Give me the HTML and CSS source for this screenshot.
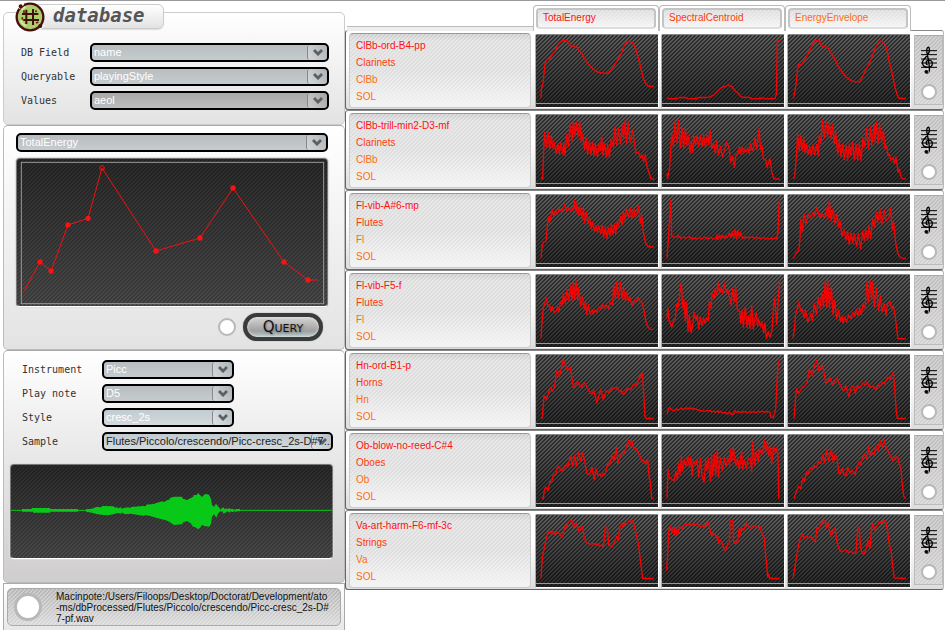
FILE: index.html
```html
<!DOCTYPE html>
<html lang="en">
<head>
<meta charset="utf-8">
<title>database</title>
<link rel="stylesheet" href="styles.css">
</head>
<body>
<svg class="defs" aria-hidden="true">
  <symbol id="arrow" viewBox="0 0 12 10"><path d="M1 3l2-2 3 3 3-3 2 2-5 5z" fill="#5c6063"/></symbol>
  <symbol id="clef" viewBox="795 138 54 90">
    <path d="M798 153.500h48M798 165.500h48M798 178.500h48M798 190.500h48M798 203.500h48" stroke="#000" stroke-width="3" fill="none"/>
    <path d="M823 216C825 200 819 174 816 160C813 148 818 141 822 144C826 153 820 166 809 177C796 190 804 205 820 203C836 202 835 183 822 182C812 182 811 194 818 196" stroke="#000" stroke-width="4" fill="none"/>
    <path d="M823 205C824 214 823 223 815 222" stroke="#000" stroke-width="2" fill="none"/>
    <circle cx="814" cy="217" r="5.500"/>
  </symbol>
</svg>
<main class="app">
  <div class="controls">
    <section class="panel panel-db">
      <header class="brand">
        <svg class="logo" viewBox="0 0 96 96" aria-hidden="true">
          <circle cx="48" cy="48" r="40" fill="#a9cf6b" stroke="#4a0d0d" stroke-width="7"/>
          <path d="M15 22L29 9M78 84L91 72" stroke="#fff" stroke-width="5"/>
          <path d="M20 58Q24 70 36 75M23 27L35 17" stroke="#d6edaa" stroke-width="5" fill="none"/>
          <path d="M37 26V69M57 24V72M24 39H73M28 57H75" stroke="#3f100d" stroke-width="6" fill="none"/>
          <path d="M30 28V36M66 28V34M25 49V56M66 66L73 63" stroke="#7c1510" stroke-width="5"/>
          <circle cx="20" cy="16" r="6" fill="#4a0d0d"/><circle cx="79" cy="75" r="6" fill="#4a0d0d"/>
        </svg>
        <h1>database</h1>
      </header>
      <div class="fields">
        <label for="field">DB Field</label>
        <div class="pick"><svg class="arrow"><use href="#arrow"/></svg><select id="field"><option>name</option></select></div>
        <label for="queryable">Queryable</label>
        <div class="pick"><svg class="arrow"><use href="#arrow"/></svg><select id="queryable"><option>playingStyle</option></select></div>
        <label for="values">Values</label>
        <div class="pick pick-grey"><svg class="arrow"><use href="#arrow"/></svg><select id="values"><option>aeol</option></select></div>
      </div>
    </section>
    <section class="panel panel-query">
      <div class="pick"><svg class="arrow"><use href="#arrow"/></svg><select aria-label="Descriptor"><option>TotalEnergy</option></select></div>
      <svg class="screen editor" viewBox="51 102 930 441" preserveAspectRatio="none">
        <rect x="64" y="112" width="907" height="424" fill="none" stroke="#999" stroke-width="3"/>
        <polyline points="72,498 120,411 153,438 204,300 264,280 306,129 468,378 600,339 699,189 852,411 924,465 954,465" fill="none" stroke="#f21010" stroke-width="3"/>
        <g fill="#f81313"><circle cx="120" cy="411" r="8"/><circle cx="153" cy="438" r="8"/><circle cx="204" cy="300" r="8"/><circle cx="264" cy="280" r="8"/><circle cx="468" cy="378" r="8"/><circle cx="600" cy="339" r="8"/><circle cx="699" cy="189" r="8"/><circle cx="852" cy="411" r="8"/><circle cx="924" cy="465" r="8"/></g>
        <circle cx="306" cy="129" r="7" fill="none" stroke="#f21010" stroke-width="3"/>
      </svg>
      <div class="actions"><input type="radio" class="lamp" aria-label="Query status"><button class="query" type="button">Query</button></div>
    </section>
    <section class="panel panel-sample">
      <div class="fields fields-short">
        <label for="instrument">Instrument</label>
        <div class="pick"><svg class="arrow"><use href="#arrow"/></svg><select id="instrument"><option>Picc</option></select></div>
        <label for="note">Play note</label>
        <div class="pick"><svg class="arrow"><use href="#arrow"/></svg><select id="note"><option>D5</option></select></div>
        <label for="style">Style</label>
        <div class="pick pick-light"><svg class="arrow"><use href="#arrow"/></svg><select id="style"><option>cresc_2s</option></select></div>
        <label for="sample">Sample</label>
        <div class="pick pick-light pick-long"><svg class="arrow"><use href="#arrow"/></svg><select id="sample"><option>Flutes/Piccolo/crescendo/Picc-cresc_2s-D#7...</option></select></div>
      </div>
      <svg class="screen wave" viewBox="33 360 963 279" preserveAspectRatio="none">
        <path d="M33 496H996" stroke="#08c818" stroke-width="3"/>
        <path fill="#08c818" d="M66 492H96V489H150V492H234V500H150V503H99V500H66zM258 493L276 491L288 486L306 487V483L340 484L346 488L352 486V490L364 487V491L382 487L392 489V486L430 483L438 484V479L460 477L486 469L492 471L501 466L510 463V459L522 455H546L549 461L561 465L573 459L579 455L582 450H590L594 444L600 450L606 456L612 449L618 447L627 449L633 462L636 479L642 486L648 476L654 484L658 488L661 495V498L655 505L649 518L642 508L636 516L633 536L628 545L613 543L606 539L600 549L593 552L585 546H580L572 535L561 528L550 532L546 538L522 540L510 532L503 528L495 525L470 519L450 513L438 511L428 512L392 506L375 508L365 502V506L352 504L343 507L324 511L303 509L290 507L276 503L258 500zM662 491L672 487V492L679 490L681 493L689 489L691 493L698 491L701 494H708V492H720V499H711L708 502L704 498L698 502L692 499L688 503L682 499L676 503L670 506L668 499L662 501z"/>
      </svg>
    </section>
    <footer class="panel-path"><div class="path-bar"><input type="radio" class="lamp lamp-large" aria-label="Play sample"><p>Macinpote:/Users/Filoops/Desktop/Doctorat/Development/ato<br>-ms/dbProcessed/Flutes/Piccolo/crescendo/Picc-cresc_2s-D#<br>7-pf.wav</p></div></footer>
  </div>

  <section class="results">
    <div class="heads"><span class="shelf"></span><div class="head"><b class="c1">TotalEnergy</b></div><div class="head"><b class="c2">SpectralCentroid</b></div><div class="head"><b class="c3">EnergyEnvelope</b></div></div>

    <article class="row">
      <div class="info"><p class="c1">ClBb-ord-B4-pp</p><p class="c2">Clarinets</p><p class="c3">ClBb</p><p class="c3">SOL</p></div>
      <div class="cell"><svg class="chart" viewBox="573 105 366 213" preserveAspectRatio="none"><polyline points="588,292 589,265 594,248 600,190 606,177 614,176 623,160 630,153 640,131 649,124 656,121 664,121 670,127 677,137 686,138 697,142 703,153 710,158 718,174 728,188 735,197 746,207 758,215 772,217 786,219 796,212 806,198 812,188 821,173 829,160 837,138 844,127 852,123 862,127 868,137 874,151 880,173 888,204 895,234 902,248 910,257 927,257"/></svg></div>
      <div class="cell"><svg class="chart" viewBox="21 105 366 213" preserveAspectRatio="none"><polyline points="36,291 45,294 66,293 72,290 92,290 99,294 125,293 130,290 152,290 164,289 175,283 184,274 195,264 206,258 214,256 220,252 225,256 231,257 240,270 250,278 258,287 265,290 281,289 290,294 316,293 322,290 332,294 354,293 360,292 364,280 367,124 376,120"/></svg></div>
      <div class="cell"><svg class="chart" viewBox="399 105 366 213" preserveAspectRatio="none"><polyline points="414,293 417,286 423,252 428,204 431,192 440,192 450,177 459,160 466,147 473,130 480,122 494,122 500,138 511,140 520,144 526,157 536,170 543,183 550,198 562,216 574,230 589,240 600,244 615,243 620,233 630,212 640,195 650,172 660,145 668,130 679,122 688,131 695,145 702,180 711,216 720,260 727,283 733,293 752,293"/></svg></div>
      <div class="side"><div class="tools"><svg class="clef"><use href="#clef"/></svg><input type="radio" name="hit" class="lamp" aria-label="ClBb-ord-B4-pp"></div></div>
    </article>

    <article class="row">
      <div class="info"><p class="c1">ClBb-trill-min2-D3-mf</p><p class="c2">Clarinets</p><p class="c3">ClBb</p><p class="c3">SOL</p></div>
      <div class="cell"><svg class="chart" viewBox="573 345 366 213" preserveAspectRatio="none"><polyline points="587,534 593,534 596,450 599,396 604,440 609,396 614,446 619,405 623,442 628,426 633,458 639,430 643,460 648,426 653,460 657,429 660,465 665,402 670,438 675,374 681,422 685,363 690,407 694,365 699,408 704,364 709,426 713,402 719,448 723,413 728,460 733,420 738,462 743,427 747,465 751,430 757,470 762,432 766,450 770,407 774,466 779,430 784,470 788,433 793,470 799,414 805,440 810,380 815,435 821,383 826,430 833,376 836,416 840,362 845,430 849,365 855,425 863,390 868,426 873,458 881,456 886,472 891,463 896,482 901,463 905,493 912,515 918,534 928,535"/></svg></div>
      <div class="cell"><svg class="chart" viewBox="21 345 366 213" preserveAspectRatio="none"><polyline points="36,517 38,533 44,500 48,430 51,402 55,438 60,366 66,427 70,361 76,442 81,384 86,442 91,387 95,432 100,405 105,456 109,426 113,456 116,407 121,433 126,407 131,439 136,405 141,438 146,405 151,439 157,405 161,432 165,389 170,444 176,430 181,459 185,422 190,464 196,438 202,467 208,452 214,425 222,440 227,486 233,466 238,500 243,463 249,459 253,440 257,460 261,440 266,459 270,446 274,454 278,442 283,459 286,429 291,450 295,446 300,414 305,446 309,413 312,386 317,447 321,435 325,475 332,477 336,500 345,474 350,512 356,533 375,535"/></svg></div>
      <div class="cell"><svg class="chart" viewBox="399 345 366 213" preserveAspectRatio="none"><polyline points="414,534 419,528 424,470 428,403 433,451 437,407 441,450 446,411 450,458 455,430 459,463 464,439 469,465 474,433 479,464 485,432 490,466 493,403 498,430 502,360 508,413 513,365 518,407 523,370 528,413 533,373 537,429 542,395 548,460 553,421 558,469 563,431 568,477 573,436 578,479 583,431 588,466 593,424 598,478 603,432 608,478 613,431 618,479 624,412 629,440 635,382 640,444 647,380 650,434 658,375 660,424 664,365 669,430 674,374 680,425 685,391 690,444 695,436 699,466 703,461 708,480 714,470 718,487 723,469 729,514 733,505 739,532 752,535"/></svg></div>
      <div class="side"><div class="tools"><svg class="clef"><use href="#clef"/></svg><input type="radio" name="hit" class="lamp" aria-label="ClBb-trill-min2-D3-mf"></div></div>
    </article>

    <article class="row">
      <div class="info"><p class="c1">Fl-vib-A#6-mp</p><p class="c2">Flutes</p><p class="c3">Fl</p><p class="c3">SOL</p></div>
      <div class="cell"><svg class="chart" viewBox="18 30 366 213" preserveAspectRatio="none"><polyline points="33,218 36,183 40,169 48,167 53,112 55,95 59,112 66,72 71,92 77,76 82,87 88,71 95,78 104,58 111,80 116,68 122,78 127,70 130,77 133,46 138,81 141,53 145,88 149,64 156,99 160,68 164,113 169,79 174,115 179,99 184,130 188,110 193,137 197,121 202,139 206,121 212,145 216,119 221,154 226,125 231,159 235,127 240,150 244,116 249,147 253,115 257,145 262,109 266,122 271,93 276,120 280,79 285,104 289,72 295,94 301,68 305,99 311,68 315,95 320,88 326,62 331,114 335,89 340,140 347,173 354,183 371,183"/></svg></div>
      <div class="cell"><svg class="chart" viewBox="396 30 366 213" preserveAspectRatio="none"><polyline points="411,218 416,146 422,46 425,150 429,154 439,155 446,150 452,158 460,154 467,158 478,153 484,160 491,157 500,160 508,155 515,160 524,155 532,160 543,155 548,160 559,160 562,146 565,161 569,149 573,159 578,149 583,158 588,151 592,157 598,143 603,156 606,138 611,156 615,132 619,160 623,133 628,156 632,141 638,158 646,155 656,157 665,153 673,158 681,155 690,159 700,156 710,160 724,159 740,158 744,140 747,60 749,43"/></svg></div>
      <div class="cell"><svg class="chart" viewBox="774 30 366 213" preserveAspectRatio="none"><polyline points="789,218 800,199 806,196 810,160 812,102 817,137 822,85 828,115 835,86 841,97 847,83 853,92 861,67 869,97 875,85 881,94 887,92 892,66 895,98 898,47 903,106 909,71 915,116 921,86 925,123 930,107 936,152 942,131 948,163 953,138 958,177 963,143 969,173 973,145 980,182 985,145 992,189 998,136 1003,164 1007,132 1013,163 1017,123 1022,158 1028,101 1033,124 1039,82 1043,111 1050,71 1055,117 1063,75 1068,106 1077,98 1082,69 1087,133 1091,111 1097,172 1104,204 1111,215 1128,219"/></svg></div>
      <div class="side"><div class="tools"><svg class="clef"><use href="#clef"/></svg><input type="radio" name="hit" class="lamp" aria-label="Fl-vib-A#6-mp"></div></div>
    </article>

    <article class="row">
      <div class="info"><p class="c1">Fl-vib-F5-f</p><p class="c2">Flutes</p><p class="c3">Fl</p><p class="c3">SOL</p></div>
      <div class="cell"><svg class="chart" viewBox="18 270 366 213" preserveAspectRatio="none"><polyline points="33,458 36,410 40,366 44,355 49,339 54,361 58,358 63,378 67,364 73,382 79,376 83,364 87,379 91,349 97,360 100,326 106,353 111,313 117,345 122,303 126,346 130,289 134,339 138,287 143,344 146,308 152,362 157,335 163,371 166,347 170,386 175,358 180,386 186,373 190,386 194,374 200,380 207,365 213,371 217,355 222,368 229,359 236,370 241,351 248,357 251,300 256,340 260,292 265,338 271,290 276,339 281,309 286,346 291,322 296,348 300,337 306,361 313,346 319,349 325,337 330,347 335,350 340,364 347,405 353,423 360,430 372,431"/></svg></div>
      <div class="cell"><svg class="chart" viewBox="396 270 366 213" preserveAspectRatio="none"><polyline points="411,398 414,367 416,402 420,410 425,424 431,404 436,400 440,356 445,365 449,326 454,292 458,366 462,343 466,406 470,352 474,437 478,388 483,440 488,421 492,380 498,403 502,388 506,430 511,395 516,419 521,398 525,413 529,397 535,405 538,348 543,368 546,325 552,340 555,311 560,330 564,293 569,322 574,307 578,325 584,293 588,321 594,315 598,334 603,358 608,310 613,349 617,306 622,370 629,379 632,411 636,373 640,424 646,364 651,425 656,391 660,428 665,360 670,430 678,380 683,420 686,401 691,422 695,408 701,441 705,411 709,458 715,437 720,454 726,435 730,370 734,336 740,416 745,340 749,286"/></svg></div>
      <div class="cell"><svg class="chart" viewBox="774 270 366 213" preserveAspectRatio="none"><polyline points="789,458 793,430 797,386 803,364 807,350 812,377 817,372 822,395 827,375 833,409 838,399 843,384 847,405 853,353 859,386 865,337 870,369 876,319 880,366 886,287 890,363 893,287 898,365 904,306 909,387 914,345 920,400 926,373 931,407 936,391 939,412 944,394 950,409 956,389 963,399 969,380 974,392 979,371 984,390 989,368 994,387 999,357 1005,367 1011,289 1015,350 1020,287 1025,343 1028,288 1033,363 1039,310 1046,374 1051,332 1056,378 1063,356 1068,389 1072,356 1080,350 1086,370 1090,362 1096,395 1104,458 1128,459"/></svg></div>
      <div class="side"><div class="tools"><svg class="clef"><use href="#clef"/></svg><input type="radio" name="hit" class="lamp" aria-label="Fl-vib-F5-f"></div></div>
    </article>

    <article class="row">
      <div class="info"><p class="c1">Hn-ord-B1-p</p><p class="c2">Horns</p><p class="c3">Hn</p><p class="c3">SOL</p></div>
      <div class="cell"><svg class="chart" viewBox="18 30 366 213" preserveAspectRatio="none"><polyline points="33,218 37,215 42,150 49,162 61,126 68,137 74,120 80,77 88,93 95,65 99,47 103,48 109,69 114,74 121,66 130,126 134,124 142,109 154,125 163,112 171,124 179,141 187,145 191,135 201,172 212,131 220,163 228,136 236,141 246,128 262,127 270,139 275,136 281,148 292,129 302,133 310,117 319,121 329,94 337,84 341,140 345,215 350,218 371,218"/></svg></div>
      <div class="cell"><svg class="chart" viewBox="396 30 366 213" preserveAspectRatio="none"><polyline points="411,206 415,190 420,185 426,193 433,195 439,189 446,193 454,187 460,192 470,186 475,190 482,186 488,191 494,188 504,193 512,195 524,196 540,194 544,198 550,196 556,200 562,195 566,200 571,196 577,201 587,200 593,205 598,198 604,206 610,205 615,195 619,199 626,198 634,200 640,197 647,198 653,201 659,197 664,200 671,197 677,201 684,197 689,199 697,196 703,200 712,197 720,199 722,214 730,215 737,190 741,110 744,59 749,43"/></svg></div>
      <div class="cell"><svg class="chart" viewBox="774 30 366 213" preserveAspectRatio="none"><polyline points="792,218 799,130 806,144 816,126 823,123 831,112 838,74 847,91 853,62 859,47 863,58 867,76 878,62 883,88 888,115 892,109 901,99 906,117 912,113 919,98 930,117 937,133 943,134 948,122 957,153 965,121 971,124 976,143 983,121 989,128 999,112 1005,120 1011,110 1019,125 1029,121 1037,133 1046,118 1050,122 1058,111 1063,115 1073,97 1080,101 1090,80 1094,130 1099,198 1102,217 1128,218"/></svg></div>
      <div class="side"><div class="tools"><svg class="clef"><use href="#clef"/></svg><input type="radio" name="hit" class="lamp" aria-label="Hn-ord-B1-p"></div></div>
    </article>

    <article class="row">
      <div class="info"><p class="c1">Ob-blow-no-reed-C#4</p><p class="c2">Oboes</p><p class="c3">Ob</p><p class="c3">SOL</p></div>
      <div class="cell"><svg class="chart" viewBox="18 270 366 213" preserveAspectRatio="none"><polyline points="36,458 40,458 43,433 47,424 54,434 60,407 65,409 70,388 77,389 81,369 87,362 92,375 98,375 105,363 110,358 113,366 119,340 123,334 128,362 134,330 139,363 146,320 152,348 158,323 163,342 170,383 178,387 186,366 193,403 198,370 204,389 209,386 215,394 220,383 225,387 231,363 234,354 239,358 246,332 252,345 259,307 264,354 269,337 275,324 282,325 290,303 295,287 300,303 305,286 311,309 318,311 328,328 336,349 340,344 346,355 353,342 357,391 361,410 365,457 371,459"/></svg></div>
      <div class="cell"><svg class="chart" viewBox="396 270 366 213" preserveAspectRatio="none"><polyline points="411,458 414,370 417,396 426,401 432,406 438,377 442,402 446,354 450,388 454,334 458,377 463,342 468,362 474,333 478,364 483,334 486,391 490,346 497,360 501,342 506,394 511,339 516,391 522,410 527,345 531,376 535,339 541,406 545,330 548,391 553,327 557,388 562,313 565,394 571,338 577,375 583,337 588,363 594,338 599,358 602,312 605,345 610,309 615,350 619,360 623,338 628,372 635,317 638,371 643,346 649,368 655,339 661,341 665,377 668,290 674,358 679,322 685,349 688,310 693,323 698,326 703,286 707,319 712,291 715,327 721,308 725,354 731,304 736,321 740,307 744,329 746,459"/></svg></div>
      <div class="cell"><svg class="chart" viewBox="774 270 366 213" preserveAspectRatio="none"><polyline points="792,458 799,438 806,422 812,428 819,397 824,406 829,378 834,387 841,367 847,372 853,360 859,366 866,348 872,354 878,328 884,352 890,314 896,346 904,313 910,351 915,328 921,335 926,382 931,385 937,368 942,387 949,391 953,366 960,384 965,374 975,388 982,363 987,350 991,358 999,336 1004,326 1010,342 1016,305 1020,330 1026,321 1032,328 1038,301 1044,317 1050,287 1056,305 1063,286 1068,307 1076,322 1082,333 1089,347 1096,336 1103,334 1108,356 1113,369 1116,409 1121,451 1127,459"/></svg></div>
      <div class="side"><div class="tools"><svg class="clef"><use href="#clef"/></svg><input type="radio" name="hit" class="lamp" aria-label="Ob-blow-no-reed-C#4"></div></div>
    </article>

    <article class="row">
      <div class="info"><p class="c1">Va-art-harm-F6-mf-3c</p><p class="c2">Strings</p><p class="c3">Va</p><p class="c3">SOL</p></div>
      <div class="cell"><svg class="chart" viewBox="18 30 366 213" preserveAspectRatio="none"><polyline points="33,218 37,154 43,127 49,98 54,84 59,78 62,84 68,78 74,87 80,81 87,84 93,92 98,94 104,65 109,67 113,54 120,46 128,48 131,67 137,54 142,61 147,80 153,69 158,65 162,94 168,110 176,115 184,116 192,114 197,118 203,115 208,121 214,119 220,124 223,97 226,67 230,66 233,77 236,119 246,123 254,110 260,93 265,104 269,68 275,55 278,67 285,54 291,56 298,46 303,51 308,47 314,67 319,89 326,119 331,164 338,217 371,218"/></svg></div>
      <div class="cell"><svg class="chart" viewBox="396 30 366 213" preserveAspectRatio="none"><polyline points="410,195 413,145 416,76 421,64 427,81 431,67 433,90 436,67 439,87 442,72 445,82 448,67 453,65 457,71 462,59 468,55 474,60 480,56 488,59 502,57 513,67 518,60 523,67 530,54 536,51 540,74 544,90 549,84 555,85 559,97 563,90 566,114 571,104 578,117 582,134 588,133 593,114 598,117 600,48 608,45 611,109 615,114 618,107 623,113 627,71 631,87 634,67 641,75 649,54 655,64 664,70 672,61 679,65 685,68 691,65 697,89 703,97 706,140 710,178 713,214 716,205 719,218 749,218"/></svg></div>
      <div class="cell"><svg class="chart" viewBox="774 30 366 213" preserveAspectRatio="none"><polyline points="789,218 793,195 800,151 806,118 811,98 818,86 824,100 830,92 836,98 843,95 849,102 856,110 861,67 866,73 872,59 880,46 886,49 889,68 896,54 899,79 904,92 910,74 915,67 920,104 924,122 930,136 938,138 946,132 955,141 964,136 969,144 978,143 981,95 984,66 988,67 991,122 995,140 1002,147 1010,125 1014,105 1020,129 1024,73 1028,55 1034,74 1040,63 1048,51 1055,55 1061,46 1067,50 1072,74 1078,116 1083,133 1088,182 1093,216 1128,218"/></svg></div>
      <div class="side"><div class="tools"><svg class="clef"><use href="#clef"/></svg><input type="radio" name="hit" class="lamp" aria-label="Va-art-harm-F6-mf-3c"></div></div>
    </article>
  </section>
</main>
</body>
</html>
```
FILE: styles.css
```css
* { box-sizing: border-box; }

body {
  --dark-lines: linear-gradient(135deg, rgba(0, 0, 0, .5) 25%, transparent 25% 50%, rgba(0, 0, 0, .5) 50% 75%, transparent 75%) 0 0 / 4px 4px;
  --soft-lines: linear-gradient(135deg, rgba(0, 0, 0, .22) 25%, transparent 25% 50%, rgba(0, 0, 0, .22) 50% 75%, transparent 75%) 0 0 / 4px 4px;
  --light-lines: linear-gradient(135deg, rgba(255, 255, 255, .3) 25%, transparent 25% 50%, rgba(255, 255, 255, .3) 50% 75%, transparent 75%) 0 0 / 4px 4px;
  margin: 0;
  background: #fff;
  font: 10px/17px "Liberation Sans", sans-serif;
}

h1, p { margin: 0; }
.defs { display: none; }

.app {
  display: grid;
  grid-template-columns: 345fr 600fr;
  align-items: start;
  border-top: 1px solid #999;
}

.controls { padding: 11px 0 0 3px; }

.panel {
  border: 1px solid #bbb;
  border-top-color: #aaa;
  border-radius: 5px;
  background: linear-gradient(#fff, #e3e3e3);
}

/* Database panel */
.panel-db { height: 113px; border-color: #ccc; }

.brand {
  display: flex;
  align-items: flex-start;
  height: 28px;
  padding-left: 10px;
  margin-top: -12px;
}

.brand h1 {
  width: 132px;
  height: 25px;
  margin: 3px 0 0 -14px;
  padding-left: 20px;
  border: 1px solid #ccc;
  border-radius: 6px;
  background: linear-gradient(#fff, #e2e2e2);
  box-shadow: 0 1px 1px #ddd;
  color: #555;
  font: italic bold 19px/20px "DejaVu Sans Mono", monospace;
}

.logo { position: relative; flex: none; width: 32px; height: 32px; }

.fields {
  display: grid;
  grid-template-columns: 69px 1fr;
  row-gap: 5px;
  padding: 14px 15px 0 17px;
  color: #333;
}

.fields label { font: 10px/19px "DejaVu Sans Mono", monospace; }

.pick {
  position: relative;
  height: 19px;
  border: 2px solid #000;
  border-radius: 5px;
  background: linear-gradient(#b8bdc0, #c6cbce);
  color: #fff;
}

.pick select {
  position: relative;
  display: block;
  width: 100%;
  height: 15px;
  margin: 0;
  padding: 0 0 0 2px;
  border: 0;
  background: none;
  color: inherit;
  appearance: none;
  font: 11px/15px "Liberation Sans", sans-serif;
}

.pick-grey { background: linear-gradient(#aaa, #bdbdbd); }
.pick-light { background: linear-gradient(#c2cbcf, #d2dade); }

.arrow {
  position: absolute;
  top: 0;
  right: 0;
  width: 20px;
  height: 15px;
  padding: 3px 3px 2px 4px;
  border-left: 1px solid #888;
  border-radius: 3px;
  background: linear-gradient(90deg, rgba(255, 255, 255, .25), rgba(130, 140, 145, .2));
}

/* Query panel */
.panel-query { height: 225px; padding: 7px 16px 0 12px; }

.screen {
  display: block;
  width: 100%;
  border: 1px solid #777;
  border-bottom-color: #fff;
  border-radius: 4px;
  background:
    var(--soft-lines),
    linear-gradient(#2a2a2a, #4a4a4a);
  box-shadow: 0 0 1px 1px #ddd;
}

.editor { height: 149px; margin-top: 6px; }

.actions {
  display: flex;
  justify-content: flex-end;
  align-items: center;
  gap: 7px;
  padding: 6px 5px 0 0;
}

.lamp {
  flex: none;
  width: 18px;
  height: 18px;
  margin: 0;
  border: 2px solid #b8b8b8;
  border-radius: 50%;
  background: #fff;
  appearance: none;
}

.query {
  width: 80px;
  height: 28px;
  padding: 0;
  border: 4px solid #3b3b3b;
  border-radius: 14px;
  background: linear-gradient(#d5d5d5, #a0a0a0 70%, #b5cccf);
  box-shadow: inset 0 0 3px #eee, 0 0 1px #555;
  color: #111;
  font: small-caps 15px/16px "DejaVu Sans", sans-serif;
  text-shadow: 1px 1px 2px #777;
}

/* Sample panel */
.panel-sample {
  height: 233px;
  padding: 9px 11px 0 6px;
  background: linear-gradient(#fff, #cfcdce);
}

.fields-short {
  grid-template-columns: 80px 1fr;
  padding: 0 0 0 12px;
}

.fields-short .pick { width: 57%; }
.fields-short .pick-long { width: auto; color: #222; }

.wave { height: 95px; margin-top: 13px; }

.panel-path {
  padding: 4px 3px;
  border: 1px solid #aaa;
  border-bottom: 0;
  background: linear-gradient(#fff, #e8e8e8);
}

.path-bar {
  display: flex;
  align-items: center;
  gap: 14px;
  min-height: 38px;
  padding-left: 6px;
  border: 1px solid #aaa;
  border-radius: 5px;
  background:
    var(--light-lines),
    linear-gradient(#b5b5b5, #d8d8d8);
}

.path-bar p { color: #111; font-size: 10px; line-height: 11px; }
.lamp-large { width: 28px; height: 28px; border-width: 3px; }

/* Results */
.results { padding: 4px 1px 0 0; }

.heads, .row {
  display: grid;
  grid-template-columns: 187fr 126fr 126fr 126fr 32fr;
}

.heads { height: 25px; padding: 0 1px; }

.shelf {
  align-self: end;
  height: 5px;
  margin-left: 1px;
  border-top: 1px solid #bbb;
  background: #eee;
}

.head {
  padding: 2px;
  border: 1px solid #bbb;
  border-bottom: 0;
  border-radius: 4px 4px 0 0;
  background: #fff;
}

.head b {
  display: block;
  height: 21px;
  padding-left: 5px;
  border: 2px solid #c4c4c4;
  border-bottom-color: #ddd;
  border-radius: 4px;
  background:
    var(--light-lines),
    linear-gradient(#dcdcdc, #f4f4f4);
  font-weight: normal;
  line-height: 15px;
}

.row {
  height: 80px;
  border: 1px solid #666;
  border-top-color: #888;
  border-right-color: #bbb;
  border-radius: 3px;
  background: linear-gradient(#fff 40%, #ddd);
}

.info {
  margin: 2px 2px 1px 3px;
  padding: 3px 0 0 6px;
  border: 1px solid #ccc;
  border-top-color: #999;
  border-radius: 4px;
  background:
    var(--light-lines),
    linear-gradient(#ccc, #dedede 10%, #dedede 50%, #f2f2f2);
}

.c1 { color: #ff1010; }
.c2 { color: #ff3a0a; }
.c3 { color: #ff6c10; }

.cell {
  padding: 3px 0 0 2px;
}

.chart {
  display: block;
  width: 100%;
  height: 74px;
  border: 1px solid #999;
  border-color: #888 #fff #fff #aaa;
  border-radius: 2px;
  background:
    linear-gradient(#999, #999) 0 68px / 100% 1px no-repeat,
    var(--dark-lines),
    linear-gradient(#5e5e5e, #2a2a2a);
}

.chart polyline {
  fill: none;
  stroke: #f80000;
  stroke-width: 4px;
  stroke-linejoin: round;
}

.side { padding: 4px 0 4px 3px; }

.tools {
  display: flex;
  flex-direction: column;
  align-items: center;
  gap: 8px;
  height: 70px;
  padding-top: 9px;
  border: 1px solid #bbb;
  border-top-color: #aaa;
  background:
    var(--light-lines),
    linear-gradient(#bfbdbe, #d3d1d2);
}

.clef { width: 18px; height: 31px; }
.tools .lamp { width: 16px; height: 16px; }
```
